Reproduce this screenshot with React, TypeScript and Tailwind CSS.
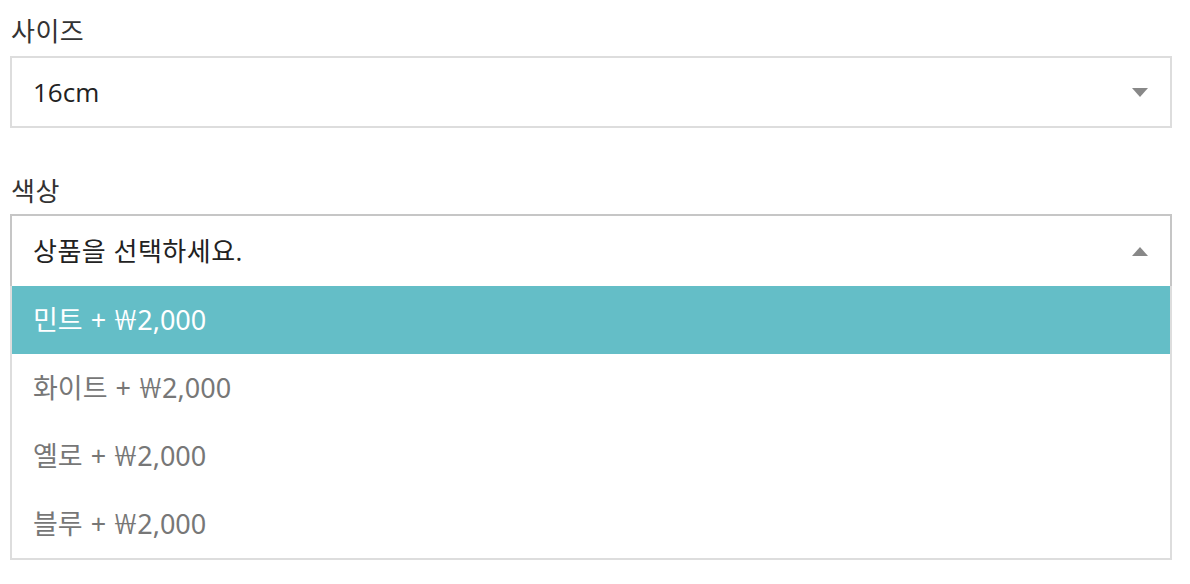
const font = { fontFamily: '"Open Sans", "Noto Sans CJK KR", sans-serif' };
const optFont = { fontFamily: '"Noto Sans", "Noto Sans CJK KR", sans-serif' };

const options = [
  { name: "민트", price: "2,000" },
  { name: "화이트", price: "2,000" },
  { name: "옐로", price: "2,000" },
  { name: "블루", price: "2,000" },
];

function Caret({ up }: { up?: boolean }) {
  return (
    <svg width="16" height="9" viewBox="0 0 16 9" className="shrink-0">
      <path d={up ? "M0 9 L8 0 L16 9 Z" : "M0 0 L16 0 L8 9 Z"} fill="#888" />
    </svg>
  );
}

export default function App() {
  return (
    <div
      className="min-h-[584px] w-[1190px] bg-white pl-[10px] pt-[13px] text-[26px] text-[#333]"
      style={font}
    >
      <div className="w-[1162px]">
        <div className="mb-[7px] pl-px leading-[36px] tracking-[0.5px]">사이즈</div>
        <div className="flex h-[72px] items-center justify-between border-2 border-[#dddddd] pl-[21px] pr-[22px] text-[#222]">
          <span>16cm</span>
          <Caret />
        </div>

        <div className="mt-[45px] mb-[5px] pl-px leading-[36px] tracking-[0.5px]">색상</div>
        <div className="flex h-[72px] items-center justify-between border-2 border-b-0 border-[#c6c6c6] pl-[21px] pr-[22px] text-[#222]">
          <span className="tracking-[0.5px]">상품을 선택하세요.</span>
          <Caret up />
        </div>
        <div className="border-2 border-t-0 border-[#dddddd] text-[27px]" style={optFont}>
          {options.map((o, i) => (
            <div
              key={o.name}
              className={`flex h-[68px] items-center pl-[21px] ${
                i === 0 ? "bg-[#64bec7] text-white" : "text-[#777]"
              }`}
            >
              <span>{o.name}</span>
              <span className="ml-[8px]">+</span>
              <span className="ml-[11px] inline-block scale-x-125 font-light">₩</span>
              <span className="ml-[3px]">{o.price}</span>
            </div>
          ))}
        </div>
      </div>
    </div>
  );
}
